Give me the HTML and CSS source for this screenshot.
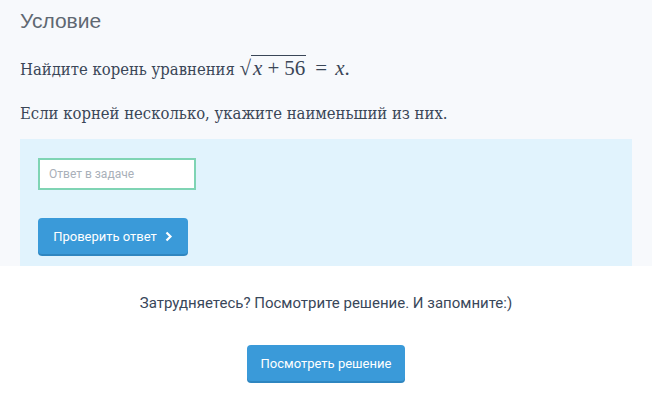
FILE: index.html
```html
<!DOCTYPE html>
<html lang="ru">
<head>
<meta charset="utf-8">
<link rel="stylesheet" href="styles.css">
</head>
<body>
<section class="task">
  <h2 class="title">Условие</h2>
  <p class="text">Найдите корень уравнения <span class="math"><span class="radical">√</span><span class="under"><i>x</i><span class="op">+</span>56</span><span class="op rel">=</span><i>x</i>.</span></p>
  <p class="text">Если корней несколько, укажите наименьший из них.</p>
  <div class="answer">
    <div class="field">Ответ в задаче</div>
    <button class="btn check">Проверить ответ <svg class="chev" width="8" height="11" viewBox="0 0 8 11"><path d="M1.5 1.5 L5.5 5.5 L1.5 9.5" fill="none" stroke="#fff" stroke-width="2.2"/></svg></button>
  </div>
</section>
<section class="help">
  <p class="help-text">Затрудняетесь? Посмотрите решение. И запомните:)</p>
  <button class="btn solution">Посмотреть решение</button>
</section>
</body>
</html>
```
FILE: styles.css
```css
html, body { margin: 0; padding: 0; background: #fff; }
body { width: 652px; height: 400px; overflow: hidden; }
.task {
  background: #f7f9fc;
  padding: 9px 20px 0 20px;
}
.title {
  margin: 0;
  font-family: "Liberation Sans", Arial, sans-serif;
  font-weight: normal;
  font-size: 21px;
  line-height: 24px;
  color: #5f6872;
}
.text {
  margin: 0;
  font-family: "DejaVu Serif Condensed", "DejaVu Serif", serif;
  font-stretch: condensed;
  font-size: 16.5px;
  color: #3a4657;
  height: 34px;
  line-height: 34px;
}
.text:nth-of-type(1) { margin-top: 20px; }
.text:nth-of-type(2) { margin-top: 10px; }
.math {
  font-family: "Liberation Serif", serif;
  font-size: 21px;
  font-stretch: normal;
  line-height: 20px;
}
.math i { font-style: italic; }
.radical { font-size: 21px; line-height: 20px; }
.under { border-top: 1.5px solid #3a4657; padding: 0 1px 0 2px; }
.op { margin: 0 5px; }
.rel { margin: 0 8px 0 9px; }
.answer {
  margin-top: 8px;
  background: #e1f3fd;
  height: 127px;
  padding: 19px 18px 0 18px;
  box-sizing: border-box;
  display: flex;
  flex-direction: column;
  align-items: flex-start;
}
.field {
  width: 158px;
  height: 32px;
  box-sizing: border-box;
  border: 2px solid #7fd4b4;
  background: #fff;
  font-family: Roboto, sans-serif;
  font-size: 12px;
  color: #a9b0b9;
  padding: 0 9px;
  line-height: 28px;
}
.btn {
  border: none;
  background: #3a9ad9;
  color: #fff;
  font-family: Roboto, sans-serif;
  font-size: 13px;
  border-radius: 4px;
  box-shadow: 0 2px 0 #2f86c0;
  height: 36px;
  margin-bottom: 2px;
  display: flex;
  align-items: center;
  justify-content: center;
}
.check { margin-top: 28px; width: 150px; gap: 8px; }
.help {
  display: flex;
  flex-direction: column;
  align-items: center;
}
.help-text {
  margin: 27px 0 0 0;
  font-family: Roboto, sans-serif;
  font-size: 15px;
  color: #39475a;
  line-height: 20px;
}
.solution { margin-top: 32px; width: 158px; }
```
